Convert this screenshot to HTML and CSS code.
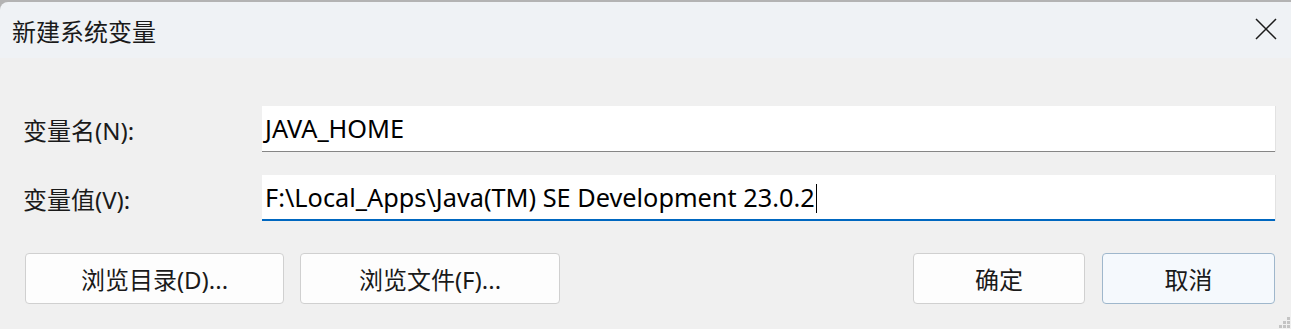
FILE: index.html
```html
<!DOCTYPE html>
<html lang="zh-CN">
<head>
    <meta charset="UTF-8">
    <meta name="viewport" content="width=device-width, initial-scale=1.0">
    <title>新建系统变量</title>
    <link rel="stylesheet" href="styles.css">
</head>
<body>

<div class="dialog">
    <div class="titlebar">
        <span class="title">新建系统变量</span>
        <button class="close" aria-label="关闭">
            <svg width="22" height="22" viewBox="0 0 22 22">
                <path d="M1 1 L21 21 M21 1 L1 21" stroke="#1b1b1b" stroke-width="1.5" fill="none"/>
            </svg>
        </button>
    </div>

    <div class="content">
        <div class="form">
            <label class="label">变量名(N):</label>
            <div class="field">JAVA_HOME</div>

            <label class="label">变量值(V):</label>
            <div class="field focused">F:\Local_Apps\Java(TM) SE Development 23.0.2<span class="caret"></span></div>
        </div>

        <div class="buttons">
            <div class="group">
                <button class="btn wide">浏览目录(D)...</button>
                <button class="btn wide">浏览文件(F)...</button>
            </div>
            <div class="group">
                <button class="btn">确定</button>
                <button class="btn default">取消</button>
            </div>
        </div>

        <svg class="grip" width="12" height="12" viewBox="0 0 12 12">
            <rect x="8" y="0" width="3" height="3" fill="#c4c4c4"/>
            <rect x="4" y="4" width="3" height="3" fill="#c4c4c4"/>
            <rect x="8" y="4" width="3" height="3" fill="#c4c4c4"/>
            <rect x="0" y="8" width="3" height="3" fill="#c4c4c4"/>
            <rect x="4" y="8" width="3" height="3" fill="#c4c4c4"/>
            <rect x="8" y="8" width="3" height="3" fill="#c4c4c4"/>
        </svg>
    </div>
</div>

</body>
</html>
```

FILE: styles.css
```css
* {
    box-sizing: border-box;
}
html, body {
    height: 100%;
}
body {
    margin: 0;
    padding-top: 2px;
    background-color: #b3b3b3;
    font-family: "Noto Sans", "Noto Sans CJK SC", sans-serif;
    color: #1a1a1a;
    overflow: hidden;
}
.dialog {
    height: 327px;
    border-top-left-radius: 8px;
    overflow: hidden;
    display: flex;
    flex-direction: column;
}
.titlebar {
    height: 56px;
    flex: none;
    display: flex;
    align-items: center;
    justify-content: space-between;
    background-color: #eff2f5;
    padding-left: 12px;
}
.title {
    font-size: 24px;
    color: #1a1a1a;
}
.close {
    border: none;
    background: none;
    padding: 0;
    width: 22px;
    height: 22px;
    margin-right: 14px;
    margin-top: -2px;
}
.close svg {
    display: block;
}
.content {
    flex: 1;
    position: relative;
    background-color: #f0f0f0;
    padding: 48px 16px 0 23px;
}
.form {
    display: grid;
    grid-template-columns: 239px 1fr;
    row-gap: 23px;
    align-items: center;
}
.label {
    font-size: 24px;
}
.field {
    height: 46px;
    background-color: #ffffff;
    border-bottom: 1px solid #868686;
    box-shadow: 1px 0 0 #e2e2e2;
    padding: 0 3px;
    font-size: 25.3px;
    line-height: 44px;
    color: #000000;
    white-space: nowrap;
}
.field.focused {
    border-bottom: 2px solid #0067c0;
}
.caret {
    display: inline-block;
    width: 1px;
    height: 29px;
    margin-left: 1px;
    vertical-align: -6px;
    background-color: #000000;
}
.buttons {
    display: flex;
    justify-content: space-between;
    margin-top: 32px;
    padding-left: 2px;
}
.group {
    display: flex;
    gap: 16px;
}
.group + .group {
    gap: 17px;
}
.btn {
    width: 172px;
    height: 51px;
    border: 1px solid #d0d0d0;
    border-radius: 4px;
    background-color: #fdfdfd;
    font-family: "Noto Sans", "Noto Sans CJK SC", sans-serif;
    font-size: 24px;
    color: #1a1a1a;
    padding: 0;
}
.btn.wide {
    width: 259px;
}
.btn.wide + .btn.wide {
    width: 260px;
}
.btn.default {
    width: 173px;
    border-color: #9fb7cc;
    background-color: #f5f9fd;
}
.grip {
    position: absolute;
    right: 0;
    bottom: 0;
}
```
